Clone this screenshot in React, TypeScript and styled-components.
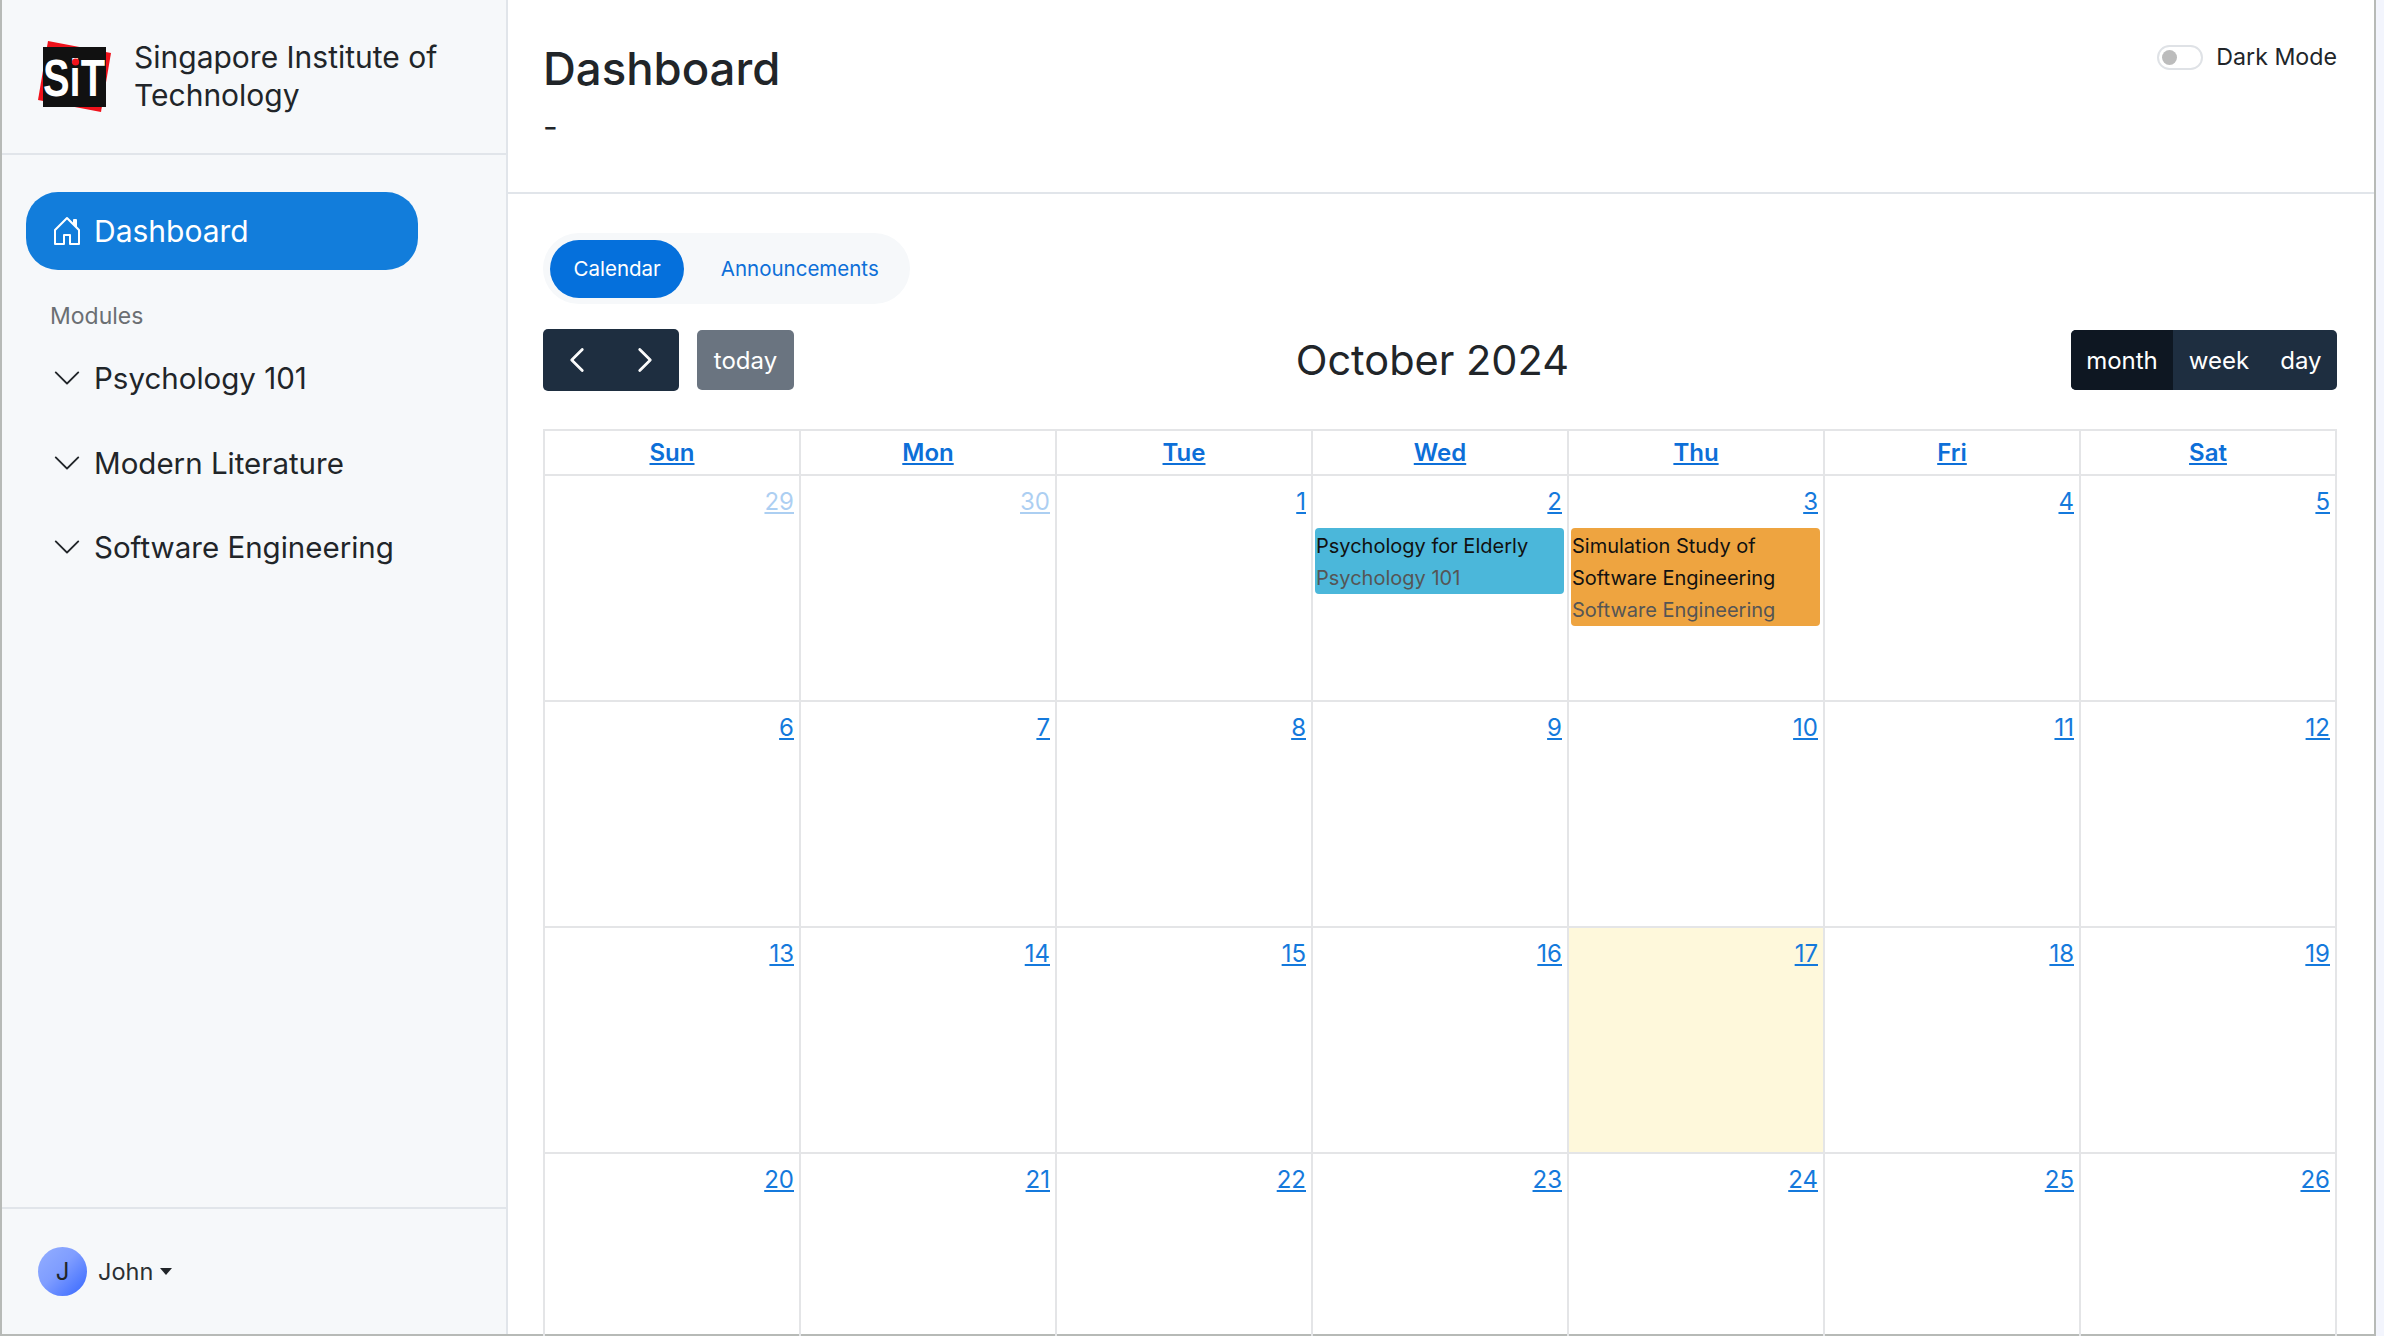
import React from "react";
import styled, { createGlobalStyle } from "styled-components";
import { BsChevronDown, BsChevronLeft, BsChevronRight, BsHouseDoor } from "react-icons/bs";

const GlobalStyle = createGlobalStyle`
  html, body { margin: 0; padding: 0; height: 100%; background: #fff; overflow: hidden; }
  * { box-sizing: border-box; }
  body { font-family: Inter, "Noto Sans", sans-serif; color: #212529; }
`;

const weekDays = ["Sun", "Mon", "Tue", "Wed", "Thu", "Fri", "Sat"];

type CalEvent = { title: string[]; module: string; color: string };

type Day = { n: number; muted?: boolean; today?: boolean; event?: CalEvent };

const weeks: Day[][] = [
  [
    { n: 29, muted: true },
    { n: 30, muted: true },
    { n: 1 },
    { n: 2, event: { title: ["Psychology for Elderly"], module: "Psychology 101", color: "#4bb7da" } },
    { n: 3, event: { title: ["Simulation Study of", "Software Engineering"], module: "Software Engineering", color: "#eea440" } },
    { n: 4 },
    { n: 5 },
  ],
  [6, 7, 8, 9, 10, 11, 12].map((n) => ({ n })),
  [13, 14, 15, 16, 17, 18, 19].map((n) => ({ n, today: n === 17 })),
  [20, 21, 22, 23, 24, 25, 26].map((n) => ({ n })),
];

export default function App() {
  return (
    <>
      <GlobalStyle />
      <Page>
        <Frame>
          <Sidebar>
            <Brand>
              <Logo viewBox="0 0 74 74">
                <polygon points="10,0 73,12 63,71 0,59" fill="#f0121b" />
                <rect x="5" y="6" width="63" height="60" fill="#111" />
                <text x="5" y="55" fontFamily="Liberation Sans" fontWeight="700" fontSize="51" fill="#fff" textLength="62" lengthAdjust="spacingAndGlyphs">SiT</text>
                <circle cx="37.6" cy="21" r="3.6" fill="#f0121b" />
              </Logo>
              <BrandName>Singapore Institute of Technology</BrandName>
            </Brand>
            <Nav>
              <ActiveLink>
                <BsHouseDoor size={32} />
                Dashboard
              </ActiveLink>
              <NavHeading>Modules</NavHeading>
              <ModuleList>
                {["Psychology 101", "Modern Literature", "Software Engineering"].map((m) => (
                  <ModuleRow key={m}>
                    <BsChevronDown size={30} />
                    {m}
                  </ModuleRow>
                ))}
              </ModuleList>
            </Nav>
            <UserBar>
              <Avatar>J</Avatar>
              <UserName>John</UserName>
              <Caret />
            </UserBar>
          </Sidebar>
          <Main>
            <Header>
              <div>
                <Title>Dashboard</Title>
                <Subtitle>-</Subtitle>
              </div>
              <DarkToggle>
                <Switch>
                  <Knob />
                </Switch>
                Dark Mode
              </DarkToggle>
            </Header>
            <Content>
              <Tabs>
                <Tab $active>Calendar</Tab>
                <Tab>Announcements</Tab>
              </Tabs>
              <Toolbar>
                <ToolGroup>
                  <NavButtons>
                    <IconButton><BsChevronLeft size={28} /></IconButton>
                    <IconButton><BsChevronRight size={28} /></IconButton>
                  </NavButtons>
                  <TodayButton>today</TodayButton>
                </ToolGroup>
                <MonthTitle>October 2024</MonthTitle>
                <ViewGroup>
                  <ViewButton $active>month</ViewButton>
                  <ViewButton>week</ViewButton>
                  <ViewButton>day</ViewButton>
                </ViewGroup>
              </Toolbar>
              <Calendar>
                {weekDays.map((d) => (
                  <HeadCell key={d}>
                    <a>{d}</a>
                  </HeadCell>
                ))}
                {weeks.flat().map((d, i) => (
                  <DayCell key={i} $today={d.today}>
                    <DayNumber $muted={d.muted}>{d.n}</DayNumber>
                    {d.event && (
                      <EventCard $color={d.event.color}>
                        {d.event.title.map((t) => (
                          <div key={t}>{t}</div>
                        ))}
                        <EventModule>{d.event.module}</EventModule>
                      </EventCard>
                    )}
                  </DayCell>
                ))}
              </Calendar>
            </Content>
          </Main>
        </Frame>
        <RightEdge />
      </Page>
    </>
  );
}

const Page = styled.div`
  display: flex;
  width: 2384px;
  height: 1336px;
  overflow: hidden;
`;

const Frame = styled.div`
  width: 2376px;
  flex: none;
  display: flex;
  border: 2px solid #b7bab7;
  border-top: none;
`;

const Sidebar = styled.aside`
  width: 506px;
  flex: none;
  display: flex;
  flex-direction: column;
  background: #f6f8fa;
  border-right: 2px solid #e1e5ea;
`;

const Brand = styled.div`
  height: 155px;
  flex: none;
  display: flex;
  align-items: center;
  gap: 22px;
  padding: 2px 30px 0 36px;
  border-bottom: 2px solid #e1e5ea;
`;

const Logo = styled.svg`
  width: 74px;
  height: 74px;
  flex: none;
  overflow: visible;
`;

const BrandName = styled.div`
  margin-bottom: 3px;
  font-size: 30px;
  line-height: 38px;
  color: #212529;
`;

const Nav = styled.nav`
  flex: 1;
  padding: 37px 24px 0;
`;

const ActiveLink = styled.div`
  width: 392px;
  height: 78px;
  display: flex;
  align-items: center;
  gap: 11px;
  padding-left: 25px;
  border-radius: 32px;
  background: #127ddb;
  color: #fff;
  font-size: 30px;
`;

const NavHeading = styled.div`
  margin: 30px 0 0 24px;
  height: 32px;
  line-height: 32px;
  font-size: 23px;
  color: #6b6f73;
`;

const ModuleList = styled.div`
  margin-top: 4px;
`;

const ModuleRow = styled.div`
  height: 84.5px;
  display: flex;
  align-items: center;
  gap: 12px;
  padding-left: 26px;
  font-size: 29.5px;
  color: #212529;
`;

const UserBar = styled.div`
  height: 127px;
  flex: none;
  display: flex;
  align-items: center;
  padding: 0 0 0 36px;
  border-top: 2px solid #e1e5ea;
`;

const Avatar = styled.div`
  width: 49px;
  height: 49px;
  border-radius: 50%;
  background: linear-gradient(135deg, #93aeff 0%, #7f9dff 45%, #3566ff 100%);
  display: flex;
  align-items: center;
  justify-content: center;
  font-size: 24px;
  color: #212529;
`;

const UserName = styled.span`
  margin-left: 11px;
  font-size: 23.5px;
  color: #2b2f33;
`;

const Caret = styled.span`
  margin-left: 7px;
  border-top: 7px solid #212529;
  border-left: 6.5px solid transparent;
  border-right: 6.5px solid transparent;
`;

const Main = styled.main`
  flex: 1;
  min-width: 0;
  display: flex;
  flex-direction: column;
  background: #fff;
`;

const Header = styled.header`
  height: 194px;
  flex: none;
  display: flex;
  justify-content: space-between;
  align-items: flex-start;
  padding: 36px 37px 0 35px;
  border-bottom: 2px solid #e1e5ea;
`;

const Title = styled.h1`
  margin: 0;
  font-size: 45.5px;
  line-height: 66px;
  font-weight: 500;
  color: #212529;
`;

const Subtitle = styled.div`
  margin-top: 5px;
  font-size: 32px;
  line-height: 40px;
  color: #212529;
`;

const DarkToggle = styled.div`
  display: flex;
  align-items: center;
  gap: 13px;
  margin-top: 6px;
  font-size: 23.2px;
  line-height: 30px;
  color: #212529;
`;

const Switch = styled.div`
  width: 46px;
  height: 25px;
  display: flex;
  align-items: center;
  padding-left: 3px;
  border: 2px solid #dfe2e6;
  border-radius: 13px;
  background: #fff;
`;

const Knob = styled.span`
  width: 15px;
  height: 15px;
  border-radius: 50%;
  background: #bcbcbc;
`;

const Content = styled.div`
  flex: 1;
  padding: 39px 37px 0 35px;
`;

const Tabs = styled.div`
  display: flex;
  gap: 13px;
  width: 367px;
  height: 71px;
  align-items: center;
  padding: 0 7px;
  border-radius: 36px;
  background: #f6f8fa;
`;

const Tab = styled.div<{ $active?: boolean }>`
  height: 58px;
  display: flex;
  align-items: center;
  padding: 0 23.5px;
  border-radius: 29px;
  font-size: 20.5px;
  color: ${(p) => (p.$active ? "#fff" : "#0d6fd8")};
  background: ${(p) => (p.$active ? "#0570dc" : "transparent")};
`;

const Toolbar = styled.div`
  margin-top: 25px;
  height: 62px;
  display: flex;
  justify-content: space-between;
  align-items: center;
`;

const ToolGroup = styled.div`
  display: flex;
  align-items: center;
  gap: 18px;
`;

const NavButtons = styled.div`
  display: flex;
  width: 136px;
  height: 62px;
  border-radius: 5px;
  background: #1e2e40;
`;

const IconButton = styled.div`
  flex: 1;
  display: flex;
  align-items: center;
  justify-content: center;
  color: #fff;
  svg {
    stroke: currentColor;
    stroke-width: 0.6;
  }
`;

const TodayButton = styled.div`
  width: 97px;
  height: 60px;
  display: flex;
  align-items: center;
  justify-content: center;
  border-radius: 5px;
  background: #6a7480;
  color: #fff;
  font-size: 24px;
`;

const MonthTitle = styled.h2`
  margin: 0;
  font-size: 41.5px;
  font-weight: 400;
  color: #212529;
`;

const ViewGroup = styled.div`
  display: flex;
  height: 60px;
  border-radius: 5px;
  overflow: hidden;
  background: #1e2e40;
`;

const ViewButton = styled.div<{ $active?: boolean }>`
  display: flex;
  align-items: center;
  padding: 0 15.5px;
  font-size: 24px;
  color: #fff;
  background: ${(p) => (p.$active ? "#0e1722" : "transparent")};
`;

const Calendar = styled.div`
  margin-top: 38px;
  display: grid;
  grid-template-columns: repeat(7, 256px);
  grid-template-rows: 45px repeat(4, 225.9px);
  border-top: 2px solid #e4e5e7;
  border-left: 2px solid #e4e5e7;
  width: 1794px;
`;

const HeadCell = styled.div`
  display: flex;
  align-items: center;
  justify-content: center;
  border-right: 2px solid #e4e5e7;
  border-bottom: 2px solid #e4e5e7;
  font-size: 24px;
  font-weight: 600;
  a { color: #0d6fd8; text-decoration: underline; }
`;

const DayCell = styled.div<{ $today?: boolean }>`
  display: flex;
  flex-direction: column;
  padding: 10px 3px 0 2px;
  border-right: 2px solid #e4e5e7;
  border-bottom: 2px solid #e4e5e7;
  background: ${(p) => (p.$today ? "#fef8db" : "transparent")};
`;

const DayNumber = styled.a<{ $muted?: boolean }>`
  align-self: flex-end;
  margin-right: 2px;
  font-size: 24px;
  line-height: 32px;
  text-decoration: underline;
  color: #1479dc;
  opacity: ${(p) => (p.$muted ? 0.35 : 1)};
`;

const EventCard = styled.div<{ $color: string }>`
  margin-top: 10px;
  padding: 2px 1px 0;
  border-radius: 4px;
  background: ${(p) => p.$color};
  font-size: 20px;
  line-height: 32px;
  color: #111;
`;

const EventModule = styled.div`
  color: #555;
`;

const RightEdge = styled.div`
  flex: 1;
  background: #f3f5fd;
`;
